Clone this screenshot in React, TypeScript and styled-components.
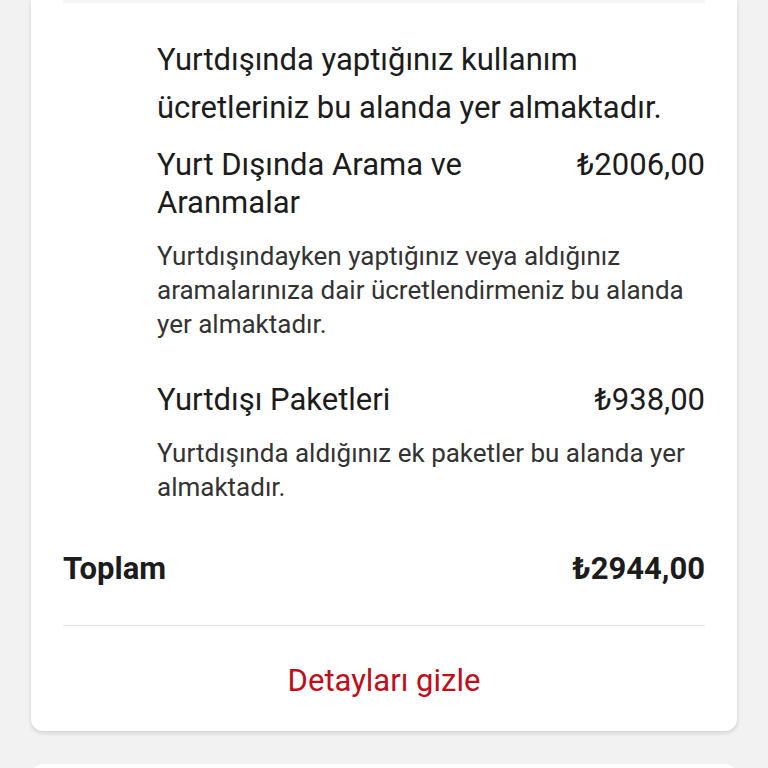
import styled, { createGlobalStyle } from "styled-components";

const GlobalStyle = createGlobalStyle`
    html, body {
        margin: 0;
        padding: 0;
        background: #f2f2f2;
        font-family: Roboto, "Liberation Sans", sans-serif;
        color: #1c1c1c;
    }
`;

const Page = styled.div`
    width: 768px;
    height: 768px;
    overflow: hidden;
    padding: 0 31px;
    box-sizing: border-box;
    display: flex;
    flex-direction: column;
    gap: 33px;
`;

const Card = styled.div`
    background: #fff;
    border-radius: 0 0 12px 12px;
    box-shadow: 0 2px 4px rgba(0, 0, 0, 0.14);
    padding: 0 32px 31px;
    display: flex;
    flex-direction: column;
`;

const NextCard = styled.div`
    background: #fff;
    border-radius: 12px 12px 0 0;
    height: 40px;
    flex-shrink: 0;
`;

const TopRule = styled.div`
    height: 3px;
    background: #f4f4f4;
`;

const Details = styled.div`
    padding-left: 94px;
    display: flex;
    flex-direction: column;
`;

const Intro = styled.p`
    margin: 33px 0 14px;
    font-size: 31px;
    line-height: 48px;
`;

const Item = styled.div<{ $last?: boolean }>`
    display: flex;
    flex-direction: column;
    gap: 17px;
    margin-bottom: ${(p) => (p.$last ? "46px" : "40px")};
`;

const ItemHead = styled.div`
    display: flex;
    justify-content: space-between;
    align-items: flex-start;
    gap: 24px;
`;

const ItemTitle = styled.span`
    font-size: 31px;
    line-height: 38px;
`;

const Amount = styled.span<{ $bold?: boolean }>`
    font-size: 31px;
    line-height: 38px;
    font-weight: ${(p) => (p.$bold ? 700 : 400)};
    white-space: nowrap;
`;

const ItemText = styled.p`
    margin: 0;
    font-size: 26px;
    line-height: 34px;
    color: #333;
`;

const TotalRow = styled.div`
    display: flex;
    justify-content: space-between;
    padding-bottom: 37px;
    border-bottom: 1px solid #e4e4e4;
`;

const TotalLabel = styled.span`
    font-size: 31px;
    line-height: 38px;
    font-weight: 700;
`;

const Toggle = styled.button`
    margin-top: 36px;
    border: 0;
    background: none;
    padding: 0;
    font-family: inherit;
    font-size: 31px;
    line-height: 38px;
    color: #bf0d1a;
    align-self: center;
    cursor: pointer;
`;

const items = [
    {
        id: 1,
        title: "Yurt Dışında Arama ve Aranmalar",
        amount: "₺2006,00",
        text: "Yurtdışındayken yaptığınız veya aldığınız aramalarınıza dair ücretlendirmeniz bu alanda yer almaktadır.",
    },
    {
        id: 2,
        title: "Yurtdışı Paketleri",
        amount: "₺938,00",
        text: "Yurtdışında aldığınız ek paketler bu alanda yer almaktadır.",
    },
];

const App = () => {
    return (
        <>
            <GlobalStyle />
            <Page>
                <Card>
                    <TopRule />
                    <Details>
                        <Intro>
                            Yurtdışında yaptığınız kullanım ücretleriniz bu alanda yer almaktadır.
                        </Intro>
                        {items.map((item, i) => (
                            <Item key={item.id} $last={i === items.length - 1}>
                                <ItemHead>
                                    <ItemTitle>{item.title}</ItemTitle>
                                    <Amount>{item.amount}</Amount>
                                </ItemHead>
                                <ItemText>{item.text}</ItemText>
                            </Item>
                        ))}
                    </Details>
                    <TotalRow>
                        <TotalLabel>Toplam</TotalLabel>
                        <Amount $bold>₺2944,00</Amount>
                    </TotalRow>
                    <Toggle>Detayları gizle</Toggle>
                </Card>
                <NextCard />
            </Page>
        </>
    );
};

export default App;
